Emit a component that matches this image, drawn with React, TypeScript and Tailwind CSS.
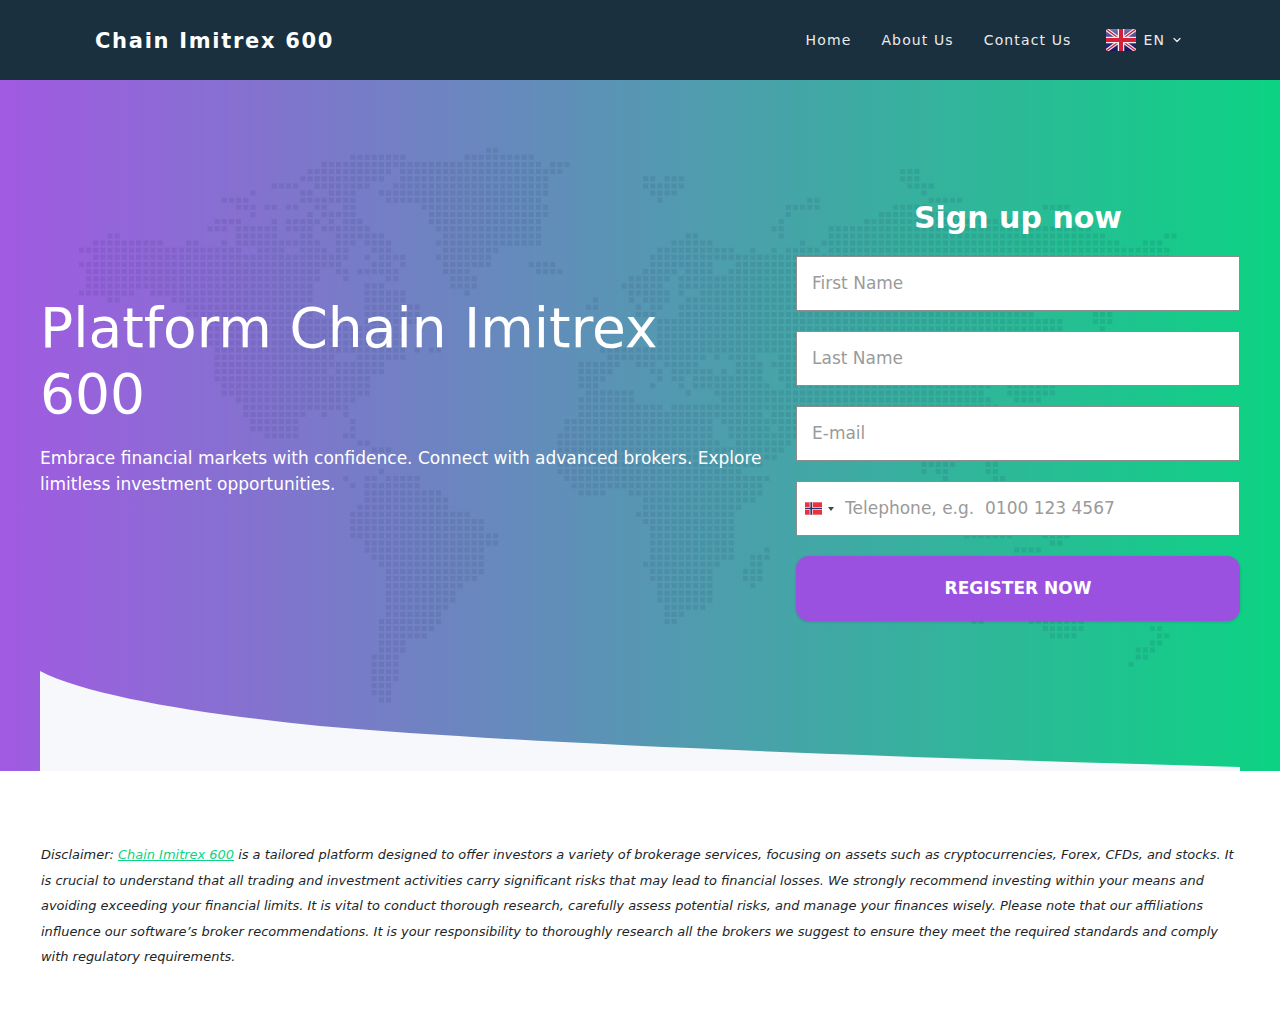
import { ChevronDown } from "lucide-react";

// dot map, row index -> pairs of start/end x in page pixels
const MAP_ROWS: number[][] = [
  [483, 497],
  [348, 403, 463, 532],
  [320, 540, 548, 568],
  [307, 390, 398, 560, 897, 917],
  [298, 382, 398, 547, 642, 653, 662, 688, 897, 923],
  [270, 297, 313, 368, 390, 547, 642, 682, 905, 938],
  [248, 260, 298, 312, 327, 360, 377, 547, 648, 675, 920, 923],
  [220, 247, 298, 360, 385, 540, 655, 660, 805, 823, 927, 960],
  [235, 253, 263, 277, 283, 297, 313, 327, 343, 353, 420, 547, 783, 817, 892, 927, 1040, 1067],
  [248, 255, 307, 312, 320, 353, 427, 547, 783, 788, 877, 960],
  [213, 240, 270, 277, 285, 318, 327, 333, 342, 362, 427, 540, 777, 788, 863, 1040],
  [205, 225, 235, 277, 285, 312, 320, 368, 433, 540, 770, 782, 827, 1090],
  [105, 118, 235, 277, 298, 312, 335, 382, 442, 540, 685, 697, 777, 788, 827, 1107, 1162, 1175],
  [92, 162, 185, 197, 220, 225, 235, 318, 335, 355, 363, 390, 433, 540, 670, 710, 800, 803, 820, 1117, 1140, 1160],
  [78, 240, 257, 283, 298, 327, 335, 347, 370, 390, 442, 500, 655, 732, 748, 753, 770, 775, 783, 817, 827, 1173],
  [92, 347, 363, 370, 377, 403, 435, 495, 648, 1170],
  [78, 340, 370, 390, 398, 410, 442, 495, 527, 553, 648, 717, 733, 1170],
  [85, 318, 335, 347, 357, 397, 442, 470, 533, 560, 642, 675, 683, 717, 725, 1170],
  [85, 318, 342, 347, 383, 397, 448, 475, 627, 668, 677, 1170],
  [85, 312, 363, 383, 448, 475, 620, 660, 677, 1170],
  [78, 132, 148, 312, 363, 403, 463, 468, 627, 668, 677, 683, 698, 1170],
  [105, 118, 170, 312, 363, 410, 592, 597, 627, 633, 642, 668, 683, 1170],
  [185, 312, 363, 418, 585, 597, 635, 640, 648, 660, 677, 1170],
  [185, 312, 363, 418, 635, 653, 677, 1038, 1090, 1110],
  [200, 347, 363, 418, 657, 1060, 1090, 1110],
  [207, 397, 657, 1060, 1100, 1103],
  [207, 403, 657, 1040],
  [207, 403, 657, 1040],
  [213, 403, 413, 418, 427, 440, 598, 1040],
  [213, 337, 357, 410, 605, 703, 712, 718, 727, 753, 777, 1040],
  [213, 382, 577, 618, 633, 653, 663, 697, 733, 762, 770, 1040],
  [213, 327, 335, 382, 577, 612, 648, 662, 670, 712, 720, 725, 733, 760, 777, 1040],
  [213, 368, 577, 603, 655, 660, 670, 683, 692, 760, 777, 1040],
  [220, 368, 577, 597, 648, 653, 677, 682, 692, 768, 785, 990, 1003, 1053],
  [220, 368, 583, 632, 683, 688, 712, 983, 1007, 1053],
  [235, 360, 577, 638, 720, 990, 1013, 1040],
  [242, 347, 577, 660, 670, 1000],
  [242, 303, 320, 327, 342, 347, 577, 760, 770, 1000],
  [248, 297, 348, 355, 563, 710, 720, 1000],
  [248, 297, 348, 355, 563, 717, 727, 768, 777, 1000],
  [263, 297, 342, 355, 557, 717, 727, 1000],
  [357, 368, 557, 723, 733, 790],
  [373, 390, 557, 787],
  [557, 775],
  [557, 760, 920, 955, 983, 997],
  [377, 382, 557, 743, 920, 925, 933, 952, 983, 997],
  [340, 345, 363, 377, 385, 418, 563, 768, 942, 945, 990, 1003],
  [348, 353, 363, 418, 570, 760],
  [363, 440, 577, 603, 627, 760],
  [363, 447, 642, 753],
  [357, 447, 642, 745],
  [348, 468, 635, 738],
  [348, 488, 642, 732],
  [348, 488, 648, 732],
  [348, 497, 648, 732, 962, 1010, 1040, 1067],
  [363, 497, 648, 732, 1048, 1060],
  [363, 482, 648, 732, 762, 768, 1012, 1040],
  [370, 482, 648, 732, 748, 768],
  [377, 482, 642, 723, 748, 760],
  [385, 482, 648, 717, 742, 760],
  [385, 475, 648, 717, 742, 760],
  [385, 460, 655, 717, 748, 753],
  [385, 453, 655, 710],
  [385, 453, 655, 710],
  [385, 447, 662, 703],
  [385, 440, 662, 688],
  [377, 440, 662, 675, 970, 982, 1027, 1082],
  [377, 432, 1040, 1082, 1148, 1160],
  [377, 425, 1048, 1075, 1155, 1167],
  [377, 410, 1148, 1160],
  [377, 403, 1132, 1158],
  [370, 397, 1132, 1152],
  [370, 397, 1125, 1137],
  [370, 397],
  [370, 397],
  [370, 390],
  [370, 390],
  [377, 390],
];

const PITCH = 7.14;

function buildMapPath() {
  let d = "";
  MAP_ROWS.forEach((row, i) => {
    const y = 150.2 + PITCH * i - 80 - 2.5;
    for (let r = 0; r < row.length; r += 2) {
      const from = Math.round((row[r] - 78) / PITCH);
      const to = Math.round((row[r + 1] - 78) / PITCH);
      for (let k = from; k < Math.max(to, from + 1); k++) {
        const x = 78 + PITCH * k + 1;
        d += `M${x.toFixed(1)} ${y.toFixed(1)}h5v5h-5z`;
      }
    }
  });
  return d;
}

const mapPath = buildMapPath();

function UkFlag() {
  return (
    <svg width="30" height="22" viewBox="0 0 60 44" className="shrink-0">
      <defs>
        <linearGradient id="ukBlue" x1="0" y1="0" x2="0" y2="1">
          <stop offset="0" stopColor="#7a74ad" />
          <stop offset="0.5" stopColor="#33307f" />
          <stop offset="1" stopColor="#15145f" />
        </linearGradient>
      </defs>
      <rect width="60" height="44" fill="url(#ukBlue)" />
      <path d="M0 0L60 44M60 0L0 44" stroke="#eee6ea" strokeWidth="7" />
      <path d="M0 0L60 44M60 0L0 44" stroke="#c8203c" strokeWidth="2.5" />
      <path d="M30 0V44M0 22H60" stroke="#f3edf0" strokeWidth="13" />
      <path d="M30 0V44M0 22H60" stroke="#d5203a" strokeWidth="8" />
    </svg>
  );
}

function NoFlag() {
  return (
    <svg width="17" height="13" viewBox="0 0 22 16" className="shrink-0">
      <rect width="22" height="16" fill="#e8323f" />
      <path d="M8 0V16M0 8H22" stroke="#f4f4f4" strokeWidth="4" />
      <path d="M8 0V16M0 8H22" stroke="#27346e" strokeWidth="2" />
    </svg>
  );
}

const inputClass =
  "h-[55px] w-full border border-[#8d8d8d] bg-white px-[15px] pb-[2px] text-[17px] text-[#495057] outline-none placeholder:text-[#9a9a9a]";

export default function App() {
  return (
    <div className="min-h-[1024px] bg-white font-['DejaVu_Sans',sans-serif]">
      {/* Header */}
      <header className="flex h-20 items-center justify-between bg-[#1a303e] pl-[95px] pr-[97px]">
        <a className="mt-1 text-[21px] font-bold tracking-[1.7px] text-white">
          Chain Imitrex 600
        </a>
        <nav className="flex items-center gap-[30px] text-[14px] tracking-[1.12px] text-[#ebebeb]">
          <a>Home</a>
          <a>About Us</a>
          <a>Contact Us</a>
          <div className="ml-[5px] flex items-center">
            <UkFlag />
            <span className="ml-[7px]">EN</span>
            <ChevronDown size={12} strokeWidth={2.5} className="ml-[6px]" />
          </div>
        </nav>
      </header>

      {/* Hero */}
      <section className="relative h-[691px] bg-[linear-gradient(90deg,#a15ae2,#0cd383)]">
        <svg
          width="1280"
          height="691"
          className="absolute left-0 top-0"
          viewBox="0 0 1280 691"
        >
          <path d={mapPath} fill="#1d2a5c" fillOpacity="0.1" />
        </svg>
        <svg
          width="1200"
          height="100"
          viewBox="0 0 1200 100"
          className="absolute bottom-0 left-10"
        >
          <path
            d="M0 0C50 26 170 44 280 55C500 74 850 86 1200 96V100H0Z"
            fill="#f6f8fb"
          />
        </svg>

        <div className="relative flex px-10 pt-[120px]">
          <div className="w-[756px] shrink-0 pt-[95px] text-white">
            <h1 className="w-[700px] text-[55px] font-normal leading-[66px]">
              Platform Chain Imitrex 600
            </h1>
            <p className="mt-[18px] text-[17px] leading-[26px]">
              Embrace financial markets with confidence. Connect with advanced
              brokers. Explore limitless investment opportunities.
            </p>
          </div>

          <form className="flex flex-1 flex-col gap-5">
            <h2 className="text-center text-[30px] font-bold leading-[36px] text-white">
              Sign up now
            </h2>
            <input className={inputClass} placeholder="First Name" />
            <input className={inputClass} placeholder="Last Name" />
            <input className={inputClass} placeholder="E-mail" />
            <div className="flex h-[55px] items-center border border-[#8d8d8d] bg-white">
              <div className="ml-[8px] flex items-center">
                <NoFlag />
                <span className="ml-[6px] h-0 w-0 border-x-[3px] border-t-[4px] border-x-transparent border-t-[#444]" />
              </div>
              <input
                className="ml-[11px] h-full min-w-0 flex-1 pb-[2px] pr-3 text-[17px] text-[#495057] outline-none placeholder:text-[#9a9a9a]"
                placeholder={"Telephone, e.g.\u00a0 0100 123 4567"}
              />
            </div>
            <button
              type="button"
              className="h-[65px] rounded-[13px] bg-[#9a51e0] text-[17px] font-bold text-white shadow-[0_1px_3px_rgba(0,0,0,0.15)]"
            >
              REGISTER NOW
            </button>
          </form>
        </div>
      </section>

      {/* Disclaimer */}
      <section className="pb-[50px] pl-[41px] pr-10 pt-[71px]">
        <p className="text-[12.96px] italic leading-[25.5px] text-[#212529]">
          Disclaimer:{" "}
          <a className="text-[#0cd383] underline">Chain Imitrex 600</a> is a
          tailored platform designed to offer investors a variety of brokerage
          services, focusing on assets such as cryptocurrencies, Forex, CFDs,
          and stocks. It is crucial to understand that all trading and
          investment activities carry significant risks that may lead to
          financial losses. We strongly recommend investing within your means
          and avoiding exceeding your financial limits. It is vital to conduct
          thorough research, carefully assess potential risks, and manage your
          finances wisely. Please note that our affiliations influence our
          software’s broker recommendations. It is your responsibility to
          thoroughly research all the brokers we suggest to ensure they meet
          the required standards and comply with regulatory requirements.
        </p>
      </section>
    </div>
  );
}
